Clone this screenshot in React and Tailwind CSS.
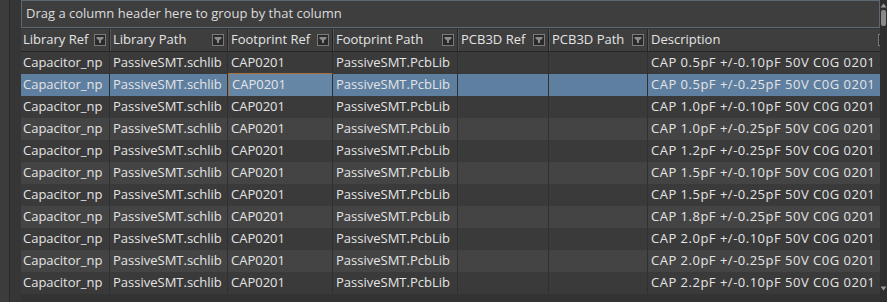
import React from "react";

const cols = [
  { name: "Library Ref", w: "w-[89px]", pl: "pl-[2px]" },
  { name: "Library Path", w: "w-[118px]", pl: "pl-[3px]" },
  { name: "Footprint Ref", w: "w-[105px]", pl: "pl-[3px]" },
  { name: "Footprint Path", w: "w-[125px]", pl: "pl-[3px]" },
  { name: "PCB3D Ref", w: "w-[91px]", pl: "pl-[3px]" },
  { name: "PCB3D Path", w: "w-[99px]", pl: "pl-[3px]" },
  { name: "Description", w: "w-[246px]", pl: "pl-[3px]" },
];

const descs = [
  "CAP 0.5pF +/-0.10pF 50V C0G 0201",
  "CAP 0.5pF +/-0.25pF 50V C0G 0201",
  "CAP 1.0pF +/-0.10pF 50V C0G 0201",
  "CAP 1.0pF +/-0.25pF 50V C0G 0201",
  "CAP 1.2pF +/-0.25pF 50V C0G 0201",
  "CAP 1.5pF +/-0.10pF 50V C0G 0201",
  "CAP 1.5pF +/-0.25pF 50V C0G 0201",
  "CAP 1.8pF +/-0.25pF 50V C0G 0201",
  "CAP 2.0pF +/-0.10pF 50V C0G 0201",
  "CAP 2.0pF +/-0.25pF 50V C0G 0201",
  "CAP 2.2pF +/-0.10pF 50V C0G 0201",
];

function FilterIcon() {
  return (
    <div className="w-[12px] h-[12px] border border-[#7a7a7a] bg-[#2a2a2a] flex items-center justify-center shrink-0">
      <svg width="8" height="8" viewBox="0 0 8 8">
        <path d="M0.5 1 H7.5 V2.5 L5 4.5 V7 H3 V4.5 L0.5 2.5 Z" fill="#8a8a8a" />
      </svg>
    </div>
  );
}

export default function App() {
  return (
    <div
      className="w-[887px] h-[302px] bg-[#363636] flex overflow-hidden text-[13px] text-[#e4e4e4]"
      style={{ fontFamily: '"Open Sans", "Noto Sans", sans-serif' }}
    >
      <div className="w-[10px] h-full bg-[#3c3c3c] border-r border-[#2a2a2a] shrink-0" />
      <div className="w-[11px] h-full bg-[#363636] shrink-0" />
      <div className="w-[859px] h-full flex flex-col shrink-0">
        <div className="h-[28px] border border-[#5d6873] bg-[#3e3e3e] flex items-center pl-[4px] text-[#dcdcdc] shrink-0">
          Drag a column header here to group by that column
        </div>
        <div className="h-[1px] bg-[#353535] shrink-0" />
        <div className="flex flex-col overflow-hidden w-[859px]">
          <div className="flex h-[23px] bg-[#3e3e3e] border-b-[1px] border-[#262626] shrink-0 w-max">
            {cols.map((c) => (
              <div
                key={c.name}
                className={`${c.w} ${c.pl} shrink-0 flex items-center justify-between pr-[3px] border-r border-[#262626] shadow-[1px_0_0_#555]`}
              >
                <span className="whitespace-nowrap">{c.name}</span>
                <FilterIcon />
              </div>
            ))}
          </div>
          {descs.map((d, i) => {
            const sel = i === 1;
            const bg = sel ? "bg-[#5e7fa0]" : i % 2 === 0 ? "bg-[#3a3a3a]" : "bg-[#444444]";
            const values = ["Capacitor_np", "PassiveSMT.schlib", "CAP0201", "PassiveSMT.PcbLib", "", "", d];
            return (
              <div key={i} className={`flex h-[22px] ${bg} shrink-0 w-max`}>
                {cols.map((c, j) => {
                  const focus = sel && j === 2;
                  const aboveFocus = i === 0 && j === 2;
                  return (
                    <div
                      key={j}
                      className={`${c.w} ${c.pl} shrink-0 flex items-center whitespace-nowrap overflow-hidden border-r ${
                        focus
                          ? "border-l border-l-[#a8703c] border-r-[#303030] bg-[#6686a6]"
                          : "border-[#303030]"
                      } ${aboveFocus ? "border-b border-b-[#a8703c]" : ""} ${j === 6 ? "tracking-[0.5px]" : ""}`}
                    >
                      {values[j]}
                    </div>
                  );
                })}
              </div>
            );
          })}
        </div>
        <div className="flex-1 bg-[#333333]" />
      </div>
      <div className="w-[7px] h-full bg-[#2e2e2e] flex flex-col items-center shrink-0">
        <svg width="7" height="5" viewBox="0 0 7 5" className="mt-[3px]">
          <path d="M3.5 0.5 L6.5 4.5 H0.5 Z" fill="#9a9a9a" />
        </svg>
        <div className="w-[5px] h-[16px] rounded-[2px] bg-[#8a8a8a] mt-[2px]" />
        <div className="flex-1" />
        <svg width="7" height="5" viewBox="0 0 7 5" className="mb-[11px]">
          <path d="M0.5 0.5 H6.5 L3.5 4.5 Z" fill="#9a9a9a" />
        </svg>
      </div>
    </div>
  );
}
